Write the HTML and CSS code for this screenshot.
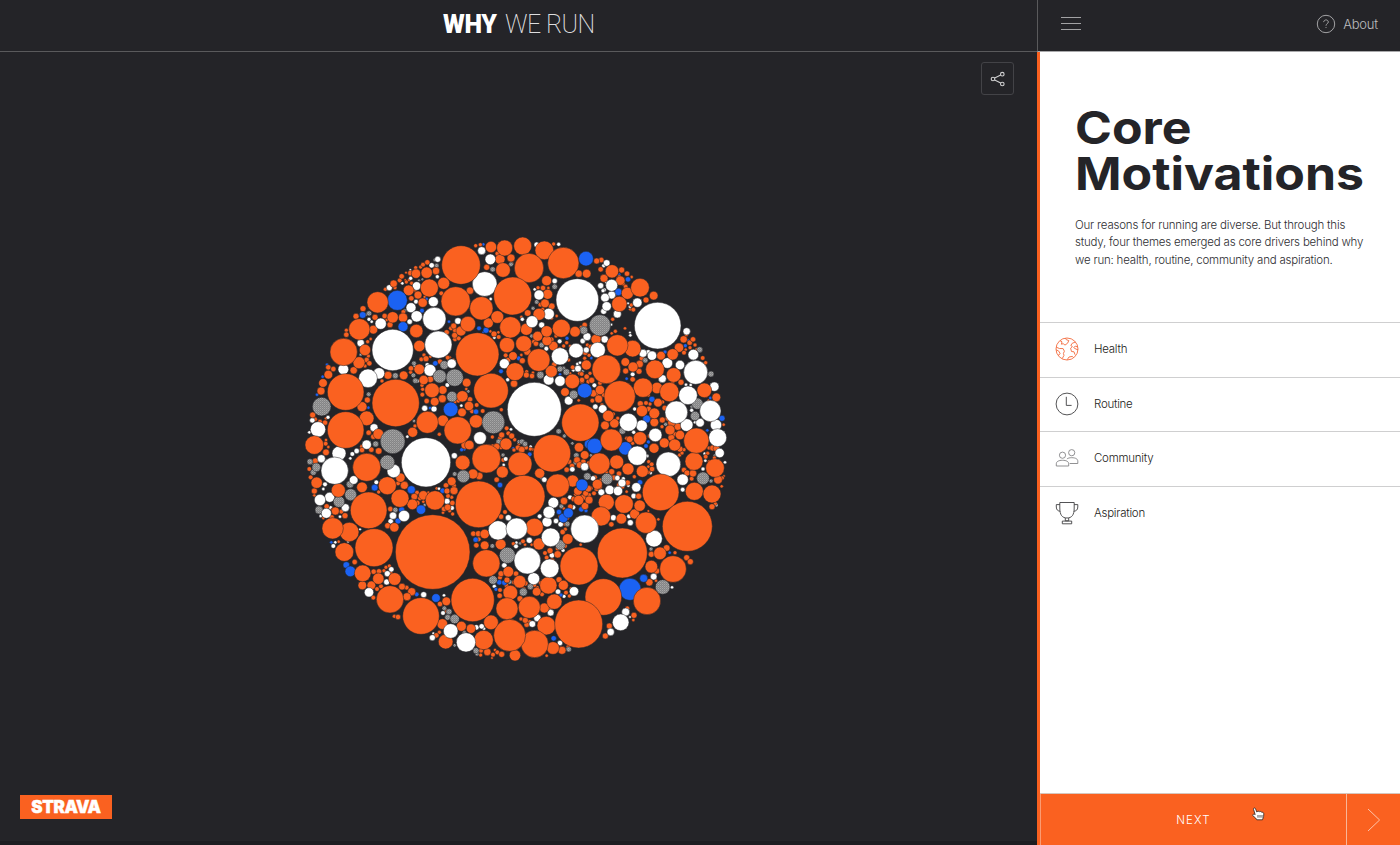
FILE: index.html
```
<!DOCTYPE html>
<html lang="en">
<head>
<meta charset="utf-8">
<title>Why We Run</title>
<link rel="stylesheet" href="styles.css">
</head>
<body>
<div class="app">
  <header class="brand">
    <h1 class="title"><b>WHY</b><span>WE RUN</span></h1>
  </header>
  <nav class="topnav">
    <div class="menu"><i></i><i></i><i></i></div>
    <div class="about">
      <svg width="20" height="20" viewBox="0 0 20 20"><circle cx="10" cy="10" r="8.7"/><path d="M7.7 8.1C7.7 5.2 12.3 5.2 12.3 8C12.3 9.8 10 9.6 10 11.7M10 13.1V14"/></svg>
      <span>About</span>
    </div>
  </nav>
  <main class="stage">
    <svg class="bubbles" viewBox="300 230 435 440" width="435" height="440">
      <defs><pattern id="dots" class="dots" width="2" height="2" patternUnits="userSpaceOnUse"><rect width="2" height="2" fill="#858586"/><rect width="1" height="1" fill="#a6a6a6"/><rect x="1" y="1" width="1" height="1" fill="#949495"/></pattern></defs>
    </svg>
    <button class="share"><svg width="16" height="16" viewBox="0 0 16 16"><circle cx="3" cy="8" r="1.8"/><circle cx="12.3" cy="3.2" r="1.8"/><circle cx="12.3" cy="13" r="1.8"/><path d="M4.7 7.1L10.7 4M4.7 8.9L10.7 12.1"/></svg></button>
    <div class="logo"><span>STRAVA</span></div>
  </main>
  <aside class="panel">
    <section class="intro">
      <h2>Core<br>Motivations</h2>
      <p>Our reasons for running are diverse. But through this<br>study, four themes emerged as core drivers behind why<br>we run: health, routine, community and aspiration.</p>
    </section>
    <ul class="themes">
      <li class="active"><svg width="24" height="24" viewBox="0 0 24 24"><circle cx="12" cy="12" r="11"/><path d="M5 3.7L7 4.8L6.4 7.2L8.2 6.7L10 8.1L12.6 6.2L13.8 3.6L11.3 2.7L10.4 1.2M1.2 10.1L4.3 11.5L8.1 11.6L9.4 14.2L8.4 16.4L9 18.3L7.2 21.7M3 18.5L5.2 16.7L3.8 14.2L1.3 12.8M20.4 5L17.2 6.3L15.8 8.5L17.4 9.5L15.6 11.2L16.5 14.5L19 14.8L20 17.7M22.8 10L20.2 9.1L18.7 10.7L21 12.1L23 12.8M12.1 22.8L14 20L17.4 19.4L18.6 20.6"/></svg><span>Health</span></li>
      <li><svg width="24" height="24" viewBox="0 0 24 24"><circle cx="12" cy="12" r="10.9"/><path d="M11.3 4.8V13.4H16.6"/></svg><span>Routine</span></li>
      <li class="thin"><svg width="24" height="24" viewBox="0 0 24 24"><circle cx="7.5" cy="9.2" r="3.1"/><circle cx="16.7" cy="6.7" r="3.1"/><path d="M1.3 20V17.8C1.3 15.5 3.7 14.3 7.5 14.3S13.7 15.5 13.7 17.8V20ZM11.9 13C13 12.1 14.5 11.7 16.7 11.7C20.7 11.7 22.8 13 22.8 15.2V17.5H14.7"/></svg><span>Community</span></li>
      <li><svg width="24" height="24" viewBox="0 0 24 24"><path d="M4.8 1.5H19.2V7C19.2 14 16.8 17 12 17S4.8 14 4.8 7ZM4.8 3.6H1.3V6C1.3 9 3.2 10.2 5.2 10.2M19.2 3.6H22.8V6C22.8 9 20.8 10.2 18.8 10.2M10.3 17V19.8H13.7V17M7.3 22.8V20.1H16.7V22.8Z"/></svg><span>Aspiration</span></li>
    </ul>
    <footer class="next">
      <span class="label">NEXT</span>
      <span class="arrow"><svg width="14" height="24" viewBox="0 0 14 24"><path d="M1 1L12.6 12L1 23"/></svg></span>
      <svg class="cursor" width="13" height="14" viewBox="0 0 13 14"><path d="M3.2 7.6L1.5 2.3C1.2 .8 3 .4 3.5 1.7L4.8 5C6 4 7 4.1 7.4 4.8C8.6 4.2 9.4 4.6 9.7 5.3C11 5 11.8 5.8 11.8 7L11.6 9.4L10.5 12.8H4.8L3.6 11L.8 8.7C.2 7.6 1.5 6.6 3.2 7.6Z"/><path d="M6 8V10.7M8 8V10.7M10 8V10.7"/></svg>
    </footer>
  </aside>
</div>
<script src="bubbles.js"></script>
</body>
</html>
```
FILE: styles.css
```
* { box-sizing: border-box; }
body { margin: 0; background: #242428; font-family: Inter, "Liberation Sans", sans-serif; }
svg { display: block; fill: none; }
.app { display: grid; grid-template-columns: 1037px 363px; grid-template-rows: 52px 793px; width: 1400px; height: 845px; overflow: hidden; }
.brand { border-bottom: 1px solid #5a5a5c; display: flex; justify-content: center; }
.title { margin: 9px 0 0; display: flex; gap: 8px; font: 300 25px/32px Roboto, sans-serif; color: #dededf; }
.title b { font-weight: 900; color: #fff; width: 54px; letter-spacing: -.3px; }
.title span { font-weight: 200; width: 89px; letter-spacing: -.6px; white-space: nowrap; }
.topnav { border-left: 1px solid #5a5a5c; border-bottom: 1px solid #a9a9ab; display: flex; justify-content: space-between; align-items: center; padding: 0 22px 4px 23px; }
.menu { width: 20px; display: flex; flex-direction: column; gap: 5px; }
.menu i { height: 1px; background: #a2a2a4; }
.about { display: flex; align-items: center; gap: 7px; color: #bdbdbf; font-size: 13px; font-weight: 300; letter-spacing: -.2px; }
.about svg { stroke: #a2a2a4; stroke-width: 1; }
.stage { position: relative; border-bottom: 4px solid #1d1d21; }
.bubbles { position: absolute; left: 300px; top: 178px; stroke: #242428; stroke-width: .5; }
.dots { stroke: none; }
.o { fill: #fa6120; }
.w { fill: #fff; }
.b { fill: #1b62f3; }
.g { fill: url(#dots); }
.share { position: absolute; left: 981px; top: 10px; width: 33px; height: 33px; padding: 0; border: 1px solid #434347; border-radius: 3px; background: none; display: grid; place-items: center; }
.share svg { stroke: #d0d0d1; stroke-width: 1.1; }
.logo { position: absolute; left: 20px; top: 743px; width: 92px; height: 24px; background: #fa6120; color: #fff; display: flex; align-items: center; justify-content: center; font: 900 17px/24px Inter, sans-serif; }
.logo span { -webkit-text-stroke: .4px #fff; letter-spacing: -.4px; }
.panel { border-left: 3px solid #fa6120; background: #fff; display: flex; flex-direction: column; }
.intro { height: 270px; padding: 53px 0 0 35px; color: #242428; }
.intro h2 { margin: 0; width: 280px; font-size: 45px; line-height: 46px; font-weight: 700; white-space: nowrap; transform: scaleX(1.11); transform-origin: left; }
.intro p { margin: 20px 0 0; font-size: 11.5px; line-height: 17.4px; font-weight: 300; letter-spacing: -.2px; white-space: nowrap; color: #2d2d31; }
.themes { list-style: none; margin: 0; padding: 0; flex: 1; }
.themes li { height: 54.6px; border-top: 1px solid #cfcfd0; padding: 0 0 1px 15px; display: flex; align-items: center; gap: 15px; font-size: 11.5px; font-weight: 300; letter-spacing: -.25px; color: #1c1c20; }
.themes svg { stroke: #3f3f42; stroke-width: .9; }
.themes .active svg { stroke: #f36b3d; }
.themes .thin svg { stroke: #858587; }
.next { position: relative; height: 52px; border-top: 1px solid #d6c6bd; background: #fa6120; color: #fff; display: flex; }
.next .label { flex: 1; display: flex; align-items: center; justify-content: center; font-size: 11.5px; font-weight: 300; letter-spacing: 1.1px; padding-top: 1px; border-left: 1px solid #fb9b72; }
.next .arrow { width: 54px; border-left: 1px solid #f9b698; display: flex; align-items: center; justify-content: center; }
.arrow svg { stroke: #ffc4aa; stroke-width: 1; }
.cursor { position: absolute; left: 212px; top: 13px; fill: #fff; stroke: #2d2422; stroke-width: .8; }
```
FILE: bubbles.js
```
// Each sheet: origin x, origin y, then "x y r" triples in thirds of a pixel per colour.
const sheets = [
 { at: [300, 230],
  o: "233 217 32 178 298 32 131 366 41 137 486 55 137 600 55 287 519 71 388 174 27 348 131 14 380 128 17 408 123 11 431 160 18 326 181 16 354 195 12 368 218 14 278 262 17 309 263 14 349 303 20 358 348 17 177 398 18 195 360 17 220 299 13 186 530 15 200 565 22 43 645 28 396 481 22 382 577 33 189 236 9 168 259 9 139 301 6 139 314 8 85 434 13 69 459 13 63 483 12 85 412 8 100 417 8 264 436 12 311 436 13 358 418 16 281 161 11 305 139 8 331 129 8 318 128 4 347 113 6 362 111 6 382 97 8 369 104 7 256 178 6 270 284 9 225 262 9 254 258 8 235 612 16 338 607 15 206 608 8 202 510 9 428 480 13 427 506 12 404 515 13 380 513 8 371 450 14 429 572 17 378 386 9 364 388 7 333 415 8 334 205 8 299 151 7 285 173 6 319 156 6 310 246 7 336 298 6 212 327 5 203 335 6 205 378 6 200 390 8 208 400 8 195 408 6 161 421 11 246 453 6 332 427 6 391 448 10 391 380 5 420 395 8 38 555 9 45 568 7 60 575 7 75 578 8 78 565 5 78 630 5 77 641 7 220 620 8 345 588 6 418 613 6 186 650 7 368 478 6 367 494 7 366 466 6 345 418 5 372 375 6 335 160 6 345 180 6 327 150 5 371 124 4 316 150 4 374 201 5 363 246 5 260 270 5 228 610 8",
  w: "278 360 62 403 267 35 415 344 41 204 445 28 237 430 17 242 281 17 350 259 17 333 233 15 350 168 13 400 215 15 182 339 11 130 418 16 390 421 18 54 598 23 222 593 12 200 644 14 348 215 7 329 275 8 268 173 9 413 88 9 395 106 8 412 140 6 332 145 6 307 160 5 207 268 6 215 275 5 196 254 5 402 537 9 374 535 9 382 405 7 352 453 6 37 571 8 28 607 5 84 562 6 322 620 5 442 465 7 331 120 4 356 202 4 344 407 5",
  b: "292 211 30 188 255 10 309 290 15 406 400 8 366 242 7 81 404 5 68 440 5 51 494 5 205 533 5 390 534 5 380 207 5 447 275 5",
  g: "65 530 28 278 634 37 419 439 20 433 405 13 286 437 9 207 250 8 206 493 7 227 642 9 342 400 7 340 436 7 346 452 8 314 242 6 410 107 7 357 151 4 367 148 4 182 374 5 342 573 5 404 90 5" },
 { at: [440, 230],
  o: "63 105 58 47 214 44 124 235 35 218 198 57 267 114 44 370 99 47 112 373 65 153 482 52 296 390 34 225 425 27 211 292 32 189 120 22 194 54 24 153 51 17 248 48 27 313 61 28 180 88 15 213 84 12 84 282 23 145 279 15 172 261 19 201 345 23 251 341 24 259 298 18 364 295 27 320 152 15 323 193 15 335 229 10 297 253 18 320 304 17 315 220 13 405 305 16 321 332 15 340 348 14 334 424 18 397 454 22 421 578 56 53 601 41 108 574 20 67 499 17 66 547 13 80 458 13 87 528 14 12 160 20 198 642 18 90 182 11 107 47 6 121 44 6 140 112 9 172 71 7 216 100 5 6 508 17 4 573 17 41 288 9 46 301 8 33 295 7 63 303 15 44 316 9 45 328 7 20 307 8 56 325 7 197 376 7 204 390 8 219 378 13 222 461 11 247 392 9 244 375 5 262 365 11 263 249 10 282 335 7 293 319 15 288 341 8 308 238 6 301 224 7 294 173 6 309 174 8 325 174 5 308 194 5 350 258 5 335 265 5 416 131 11 440 131 13 341 42 6 259 435 9 276 438 8 260 425 6 279 428 5 334 329 8 348 318 6 359 356 6 371 348 6 380 338 6 390 348 5 375 486 13 416 511 5 386 390 6 343 403 8 398 412 7 390 430 5 420 430 7 439 405 15 426 450 8 440 440 8 417 652 14 442 625 8 375 642 5 110 525 7 128 543 7 184 539 6 55 512 7 90 508 8 45 515 6 96 544 7 185 615 9 200 595 7 205 610 7 215 618 9 224 629 6 234 653 8 157 621 6 170 650 10 180 625 7 158 650 8 88 645 14 183 652 7 237 640 6 258 653 7 278 658 5 162 312 9 151 304 5 176 321 7 175 307 5 23 383 7 29 382 5 40 390 5 79 477 5 4 190 7 244 261 5",
  w: "134 162 37 151 88 16 125 62 12 412 210 64 283 538 81 120 624 19 193 401 15 276 275 18 326 252 17 297 195 15 360 379 26 408 362 22 326 449 16 360 453 16 386 512 13 35 401 14 54 273 10 305 285 9 344 153 8 290 44 8 356 43 6 247 268 6 -17 270 35 108 526 9 64 527 5 249 374 10 203 449 6 359 334 7 319 356 7 152 207 5 284 178 5 323 175 6 213 598 5 272 650 5 428 333 8 441 320 12 439 360 9 414 416 10 412 402 5 400 421 5 420 398 5 163 323 5",
  b: "438 86 22 32 538 22 434 482 22 138 301 9 117 295 7 28 274 6 183 424 7 236 385 7 79 479 7 108 545 8 381 325 6 360 433 5 130 43 5 130 307 4 448 642 15 220 655 5 73 658 5",
  g: "44 443 26 4 441 21 160 577 34 36 500 16 13 404 14 301 435 11 401 494 13 158 118 8 213 103 7 290 216 7 344 170 8 431 301 12 279 235 6 360 417 9 379 426 10 305 345 8 275 318 6 356 604 8 373 618 6 246 635 8 176 635 8 255 642 8 237 635 6 371 415 6 391 446 5 85 484 5 397 640 5 143 90 5" },
 { at: [580, 230],
  o: "34 131 28 96 124 20 125 120 9 141 131 8 121 152 14 142 190 18 180 173 28 118 222 23 221 197 13 198 210 9 160 239 7 154 225 6 155 141 5 72 145 12 62 118 8 50 93 9 64 90 8 112 346 32 158 356 25 79 418 43 119 499 47 189 473 29 231 474 17 268 486 29 225 418 28 281 435 22 278 373 17 297 353 14 243 377 13 349 632 38 94 630 33 373 481 22 409 502 13 180 625 20 159 411 15 136 396 13 179 402 11 177 424 9 137 423 9 158 448 8 186 385 8 17 404 17 16 437 15 48 328 15 16 368 8 35 451 9 60 480 14 56 507 12 40 490 11 60 459 7 85 558 17 75 586 13 103 580 14 186 543 17 181 521 9 198 519 7 206 537 8 234 518 13 223 550 16 248 516 6 254 534 8 223 577 13 247 570 9 205 495 6 270 600 15 300 615 14 284 645 18 253 639 15 274 623 10 293 590 11 275 578 12 265 565 9 222 655 15 246 590 6 311 328 11 303 348 7 319 314 6 329 338 8 339 328 8 312 368 7 330 353 6 317 359 5 345 345 6 368 384 7 377 398 6 351 360 7 303 457 9 278 458 6 98 268 6 106 304 6 95 310 5 135 295 5 31 350 7 22 345 6 27 376 6 14 385 6 25 455 7 6 455 7 37 512 7 50 495 6 66 525 6 71 495 7 100 552 6 113 565 6 81 602 5 149 628 10 140 625 6 158 640 6 209 618 7 409 655 10 387 654 6 431 584 5 396 575 5 379 498 5 386 512 5 375 524 5 147 183 6 107 192 6 118 140 6 130 162 6 137 170 7 107 158 6 14 285 8 65 325 6 4 292 6 151 238 5 5 432 7 30 430 6 210 522 6 285 612 7 213 560 6",
  w: "-3 210 61 95 166 18 95 195 12 75 203 13 80 229 14 71 244 9 131 279 28 112 252 12 172 218 14 233 287 70 53 360 23 25 320 12 19 360 13 74 328 11 8 333 9 189 370 12 216 377 14 205 367 8 262 399 16 300 405 14 247 446 12 347 427 36 340 374 16 320 304 11 403 470 14 324 496 28 289 547 34 391 543 32 320 585 19 360 578 13 408 585 17 413 623 27 145 577 27 185 587 17 226 615 20 68 537 13 46 530 8 43 466 7 80 99 10 71 107 6 62 167 9 80 156 6 158 433 7 164 537 6 161 607 6 151 316 5 150 230 5 144 220 4 93 310 6 73 180 6 150 308 4 94 284 4 318 464 5 332 465 5 4 360 8 335 541 6 69 182 6 345 577 5",
  b: "18 86 22 115 186 11 144 148 8 74 182 6 15 482 23 34 384 5 216 508 9 200 567 12 44 648 23 136 655 20 255 366 6 316 347 6 140 446 5 205 636 6 426 565 9 382 601 5 391 504 5 198 648 7 325 332 5 118 134 5",
  g: "60 286 32 12 303 13 196 391 8 352 521 17 345 558 14 393 432 9 359 359 9 127 603 10 8 424 5 257 583 6 335 530 5" },
 { at: [300, 445],
  o: "200 67 42 206 196 55 222 308 57 398 321 112 262 122 27 300 160 27 405 166 29 337 178 16 370 151 14 301 98 14 313 121 12 186 127 16 115 136 21 50 113 17 98 250 32 148 261 29 133 321 28 188 385 25 235 401 17 284 402 19 270 463 41 363 513 55 187 421 13 214 421 13 283 247 14 263 242 9 271 192 8 135 212 9 106 198 12 80 184 8 164 351 8 236 18 10 214 14 8 46 48 9 78 22 10 28 72 7 32 97 7 43 138 9 43 151 5 95 217 8 70 219 5 116 290 5 99 195 7 124 200 7 186 15 8 221 380 8 237 379 8 252 377 6 258 367 6 268 363 6 272 385 7 306 425 10 320 428 7 335 440 12 321 455 12 220 458 7 283 514 6 294 516 8 427 537 16 437 590 22 409 571 8 418 562 6 231 432 7 243 424 7 439 469 13 420 477 8 440 498 7 343 155 10 351 143 7 360 160 7 352 174 8 294 115 7 236 141 6 350 186 6 410 130 5 438 121 8 441 138 9 432 192 8 443 187 10 385 143 5 429 203 5 370 170 5 85 6 5",
  w: "104 77 41 378 52 74 117 25 21 281 78 20 161 105 13 60 165 17 89 157 15 79 205 15 136 188 12 312 213 17 279 212 11 272 229 8 64 41 12 75 118 7 70 132 5 170 18 8 157 27 7 151 40 5 184 6 7 229 112 7 262 386 9 274 373 8 260 411 9 207 442 14 371 449 9 397 578 9 106 292 5 100 303 7 62 213 5 120 215 5 180 253 4 144 290 4 417 131 5 441 169 9 429 504 7 432 451 5 400 565 4 92 188 6",
  b: "334 134 12 224 128 10 363 194 14 305 194 9 294 228 9 139 360 10 151 379 16 350 448 7 408 459 13 94 292 5 428 137 8",
  g: "281 -10 37 262 52 22 152 149 18 117 170 17 150 118 11 57 195 12 49 67 13 30 50 9 40 82 9 286 195 8 374 180 5 433 490 7 446 500 11 443 517 9 44 58 7" },
 { at: [440, 445],
  o: "139 41 43 240 57 36 336 25 56 116 178 70 252 154 63 353 122 35 68 53 22 187 81 18 99 87 15 118 93 11 299 85 15 398 108 18 139 355 41 98 465 65 201 491 33 209 571 48 284 597 41 268 487 33 325 421 26 343 470 23 319 542 28 313 489 15 153 532 22 131 585 29 417 363 57 416 537 72 211 443 22 239 410 19 205 380 16 283 247 27 297 297 18 383 282 16 225 631 17 64 544 15 93 551 14 17 590 21 19 469 14 339 609 19 366 616 12 370 421 15 357 404 9 378 443 7 182 298 16 134 301 13 134 267 14 115 266 9 100 266 8 109 301 8 116 283 7 35 109 13 42 137 12 23 139 10 20 123 8 37 174 8 38 207 6 29 197 6 42 122 7 24 153 7 35 157 6 170 104 8 183 215 8 195 201 7 198 3 18 245 14 10 258 9 7 271 12 6 222 15 6 234 5 6 190 45 7 171 5 6 420 7 17 411 45 10 387 50 8 372 168 11 391 185 8 416 166 15 414 138 13 434 30 13 447 55 8 380 74 8 396 63 8 419 60 10 407 148 6 430 157 9 437 145 9 401 162 8 368 261 8 376 253 6 375 303 7 368 308 5 315 324 7 330 317 9 353 328 11 320 338 7 336 347 8 353 311 7 220 296 6 249 289 7 255 299 5 275 299 5 172 299 6 183 386 9 228 386 8 201 405 9 180 398 7 290 440 13 306 433 6 302 414 7 292 428 6 240 461 9 179 452 8 180 435 7 222 412 7 199 421 7 256 415 8 283 420 7 252 432 6 306 448 7 388 453 6 393 430 5 243 522 6 256 526 9 260 539 8 269 531 7 142 621 11 122 630 6 123 617 7 159 629 7 172 622 7 185 628 9 165 615 5 156 639 4 320 632 5 385 606 7 330 489 7 75 0 12 95 5 7 428 185 6 447 165 12 371 190 5 382 220 6 360 215 6 375 238 6 422 299 5",
  w: "43 32 9 174 256 29 230 251 32 332 277 28 327 202 18 340 173 16 321 231 15 299 214 7 262 347 40 329 370 28 281 401 18 402 439 14 434 252 42 32 558 22 78 592 29 205 218 9 193 361 8 354 440 8 332 503 10 277 537 10 292 519 11 360 594 8 109 547 8 125 544 8 132 551 5 268 286 9 228 304 7 400 187 7 397 73 8 434 65 12 313 104 8 197 42 7 191 60 5 336 331 8 369 316 6 348 228 8 362 238 8 390 157 7 9 505 7 36 189 7 21 170 9 13 452 5 229 293 5 372 454 6 163 424 6",
  b: "77 20 14 180 120 8 426 120 18 385 204 15 370 219 14 357 201 8 424 193 8 107 284 8 178 412 8 193 413 8 168 433 6 341 580 8 269 28 7 65 14 6 369 458 9 363 450 6 438 197 6 446 5 8",
  g: "70 94 19 202 331 24 361 300 15 159 405 13 250 441 12 44 522 14 27 500 9 108 617 9 386 613 8 157 303 7 271 425 9 209 411 7 382 237 8 364 184 7 44 87 7 409 31 8 442 94 11 315 322 6 240 295 5 406 53 7 189 30 6 73 562 6 111 627 6 44 601 5 305 97 7 193 437 5" },
 { at: [580, 445],
  o: "58 56 32 110 51 21 144 72 18 187 79 18 223 18 22 283 10 17 342 49 27 405 69 28 343 139 27 396 147 27 242 142 55 322 244 75 127 324 75 132 177 28 79 172 24 63 214 29 198 233 32 179 182 17 164 207 15 124 221 16 70 456 55 201 468 41 279 372 40 240 325 19 214 365 19 208 412 11 52 118 15 33 167 16 15 183 11 10 152 9 27 150 7 25 131 10 42 145 7 13 32 14 10 50 8 95 80 9 93 93 7 117 86 8 215 58 7 206 50 6 216 72 8 205 82 6 217 6 5 205 65 5 118 120 8 102 98 8 143 113 8 128 126 6 176 154 9 165 135 6 50 131 8 205 198 4 235 223 5 94 238 8 260 309 10 285 323 6 214 328 9 320 338 9 331 350 9 230 378 9 228 407 5 142 490 7 162 511 9 160 525 5 88 543 9 76 573 9 339 85 11 321 84 9 312 75 8 336 73 7 335 101 7 318 99 6 398 9 9 416 48 6 414 104 13 427 99 6 425 124 5 432 93 4 396 185 9 406 176 6 377 35 7 383 25 6 403 39 6 388 50 6 300 12 9 312 14 6 299 30 6 306 24 6 140 140 5 4 299 6 95 -15 33 63 105 6 80 82 5 163 95 6 45 97 7 58 125 9 33 130 6",
  w: "172 32 29 265 58 37 419 24 14 308 104 17 222 281 25 122 532 25 14 64 12 89 135 14 114 138 14 64 142 10 169 127 14 126 114 12 112 99 8 161 153 8 100 218 9 151 233 9 147 214 7 369 72 6 308 134 7 221 395 10 276 427 5 137 501 12 92 561 11 409 180 5 212 84 5 150 516 4 370 86 5 376 47 5 435 52 5 374 26 5 130 101 6 145 122 5 202 33 5 39 100 8",
  b: "134 12 19 150 433 33 191 400 12 180 112 8 4 193 8 269 323 5 199 3 8 19 197 4",
  g: "81 102 17 160 97 13 369 100 19 248 426 22 22 93 10 213 312 6 393 108 6 33 31 5 404 32 5 405 42 5 102 130 5" }
];

const svg = document.querySelector(".bubbles");
const all = [];
for (const sheet of sheets) {
  for (const kind of "owbg") {
    const n = sheet[kind].split(" ").map(Number);
    for (let i = 0; i < n.length; i += 3) {
      const c = { kind, x: sheet.at[0] + n[i] / 3, y: sheet.at[1] + n[i + 1] / 3, r: n[i + 2] / 3 };
      // Neighbouring sheets share an edge, so skip a bubble already placed from the other one.
      if (!all.some(d => Math.hypot(d.x - c.x, d.y - c.y) < Math.max(c.r, d.r) * 0.6)) all.push(c);
    }
  }
}
all.sort((a, b) => a.r - b.r);
for (const c of all) {
  const el = document.createElementNS("http://www.w3.org/2000/svg", "circle");
  el.setAttribute("class", c.kind);
  el.setAttribute("cx", c.x.toFixed(2));
  el.setAttribute("cy", c.y.toFixed(2));
  el.setAttribute("r", c.r.toFixed(2));
  svg.append(el);
}
```
